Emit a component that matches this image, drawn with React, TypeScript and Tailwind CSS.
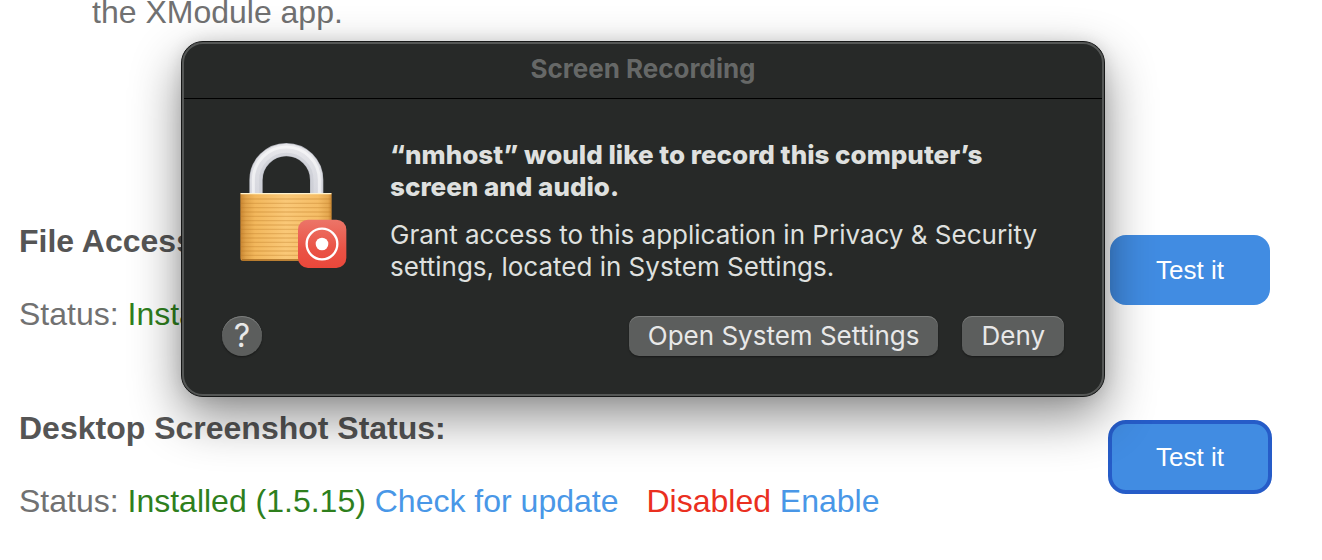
import { useId } from "react";
import type { ReactNode } from "react";

function LockIcon() {
  const id = useId();
  const stripes = Array.from({ length: 14 }, (_, i) => 207 + i * 13);
  return (
    <svg viewBox="60 27 330 390" className="h-[130px] w-[110px] shrink-0" role="img" aria-label="Locked, screen recording">
      <defs>
        <linearGradient id={`${id}-brass`} x1="0" x2="1" y1="0" y2="0">
          <stop offset="0" stopColor="#c98632" />
          <stop offset="0.06" stopColor="#e0a249" />
          <stop offset="0.16" stopColor="#f2b75c" />
          <stop offset="0.5" stopColor="#fac877" />
          <stop offset="0.85" stopColor="#f5bd66" />
          <stop offset="0.96" stopColor="#e5a850" />
          <stop offset="1" stopColor="#c98632" />
        </linearGradient>
        <linearGradient id={`${id}-steel`} x1="0" x2="0" y1="0" y2="1">
          <stop offset="0" stopColor="#e6e6ea" />
          <stop offset="0.3" stopColor="#dfe0e5" />
          <stop offset="1" stopColor="#d6d7de" />
        </linearGradient>
        <linearGradient id={`${id}-badge`} x1="0" x2="0" y1="0" y2="1">
          <stop offset="0" stopColor="#ec7568" />
          <stop offset="0.6" stopColor="#ea5346" />
          <stop offset="1" stopColor="#ea473a" />
        </linearGradient>
      </defs>
      <g fill="none">
        <path d="M108 192V150a91 91 0 0 1 182 0V192" stroke="#b4b6be" strokeWidth="40" />
        <path d="M108 192V150a91 91 0 0 1 182 0V192" stroke={`url(#${id}-steel)`} strokeWidth="36" />
        <path d="M100 192V150a99 99 0 0 1 198 0V192" stroke="#ffffff" strokeOpacity="0.55" strokeWidth="9" />
        <path d="M122 192V150a77 77 0 0 1 154 0V192" stroke="#b7bac3" strokeOpacity="0.3" strokeWidth="9" />
      </g>
      <path d="M61 189h274v195q0 9-9 9H70q-9 0-9-9z" fill={`url(#${id}-brass)`} />
      {stripes.map((y) => (
        <path key={y} d={`M62 ${y}H334`} stroke="#b97824" strokeOpacity="0.3" strokeWidth="4" />
      ))}
      <path d="M62 191H334" stroke="#fff3cf" strokeWidth="4" />
      <path d="M66 390H330" stroke="#a66a20" strokeWidth="4" />
      <rect x="234" y="269" width="145" height="145" rx="30" fill={`url(#${id}-badge)`} />
      <circle cx="306" cy="342" r="46" fill="none" stroke="#ffffff" strokeWidth="7" />
      <circle cx="306" cy="342" r="19" fill="#ffffff" />
    </svg>
  );
}

function StatusSection({ title, focused, children }: { title: string; focused?: boolean; children: ReactNode }) {
  return (
    <section className="flex items-start justify-between">
      <div className="flex flex-col gap-[37px] text-[32px] leading-9 text-[#717171]">
        <h2 className="font-bold text-[#555555]">{title}</h2>
        <p>Status: {children}</p>
      </div>
      <button
        type="button"
        className={
          "mt-3 h-[70px] w-40 shrink-0 rounded-2xl bg-[#418ce2] text-[26px] leading-8 text-white " +
          (focused ? "outline-4 -outline-offset-2 outline-[#265cc8]" : "")
        }
      >
        Test it
      </button>
    </section>
  );
}

function DialogButton({ children }: { children: ReactNode }) {
  return (
    <button
      type="button"
      className="h-10 rounded-[10px] bg-[#5c5e5d] px-[19px] text-[26px] leading-9 text-[#e8e8e8] shadow-[inset_0_1px_0_#7b7d7c,0_1px_2px_#00000066]"
    >
      {children}
    </button>
  );
}

function PermissionDialog() {
  return (
    <div
      role="dialog"
      aria-labelledby="permission-title"
      className="absolute top-[41px] left-[181px] w-[924px] rounded-[22px] border border-[#161717] bg-[#272928] font-['Inter',sans-serif] text-[26px] leading-8 text-[#dfe0df] shadow-[0_20px_50px_#00000073,0_0_16px_#0000001a]"
    >
      <div className="rounded-[21px] border-2 border-[#555756] pb-[38px]">
        <h1 id="permission-title" className="border-b border-black pt-[9px] pb-[13px] text-center font-bold text-[#666867]">
          Screen Recording
        </h1>
        <div className="flex gap-10 pt-10 pl-14">
          <LockIcon />
          <div className="flex flex-col gap-4">
            <p className="font-extrabold">
              “nmhost” would like to record this computer’s
              <br />
              screen and audio.
            </p>
            <p>
              Grant access to this application in Privacy &amp; Security
              <br />
              settings, located in System Settings.
            </p>
          </div>
        </div>
        <div className="mt-[33px] flex items-center gap-6 px-[38px]">
          <button
            type="button"
            aria-label="Help"
            className="mr-auto size-10 rounded-full bg-[#5c5e5d] text-[32px] leading-10 text-[#e8e8e8] shadow-[inset_0_1px_0_#7b7d7c,0_1px_2px_#00000066]"
          >
            ?
          </button>
          <DialogButton>Open System Settings</DialogButton>
          <DialogButton>Deny</DialogButton>
        </div>
      </div>
    </div>
  );
}

export default function App() {
  return (
    <main className="relative min-h-screen overflow-hidden bg-white font-['Liberation_Sans',Arial,sans-serif]">
      <p className="pl-[92px] text-[32px] leading-6 text-[#717171]">the XModule app.</p>
      <div className="mt-[199px] flex flex-col gap-[78px] pr-[52px] pl-[19px]">
        <StatusSection title="File Access Status:">
          <span className="text-[#2e7f1d]">Installed</span>
        </StatusSection>
        <StatusSection title="Desktop Screenshot Status:" focused>
          <span className="text-[#2e7f1d]">Installed (1.5.15)</span>{" "}
          <a href="#update" className="text-[#4997e7]">Check for update</a>
          <span className="ml-7 text-[#ea2f20]">Disabled</span>{" "}
          <a href="#enable" className="text-[#4997e7]">Enable</a>
        </StatusSection>
      </div>
      <PermissionDialog />
    </main>
  );
}
